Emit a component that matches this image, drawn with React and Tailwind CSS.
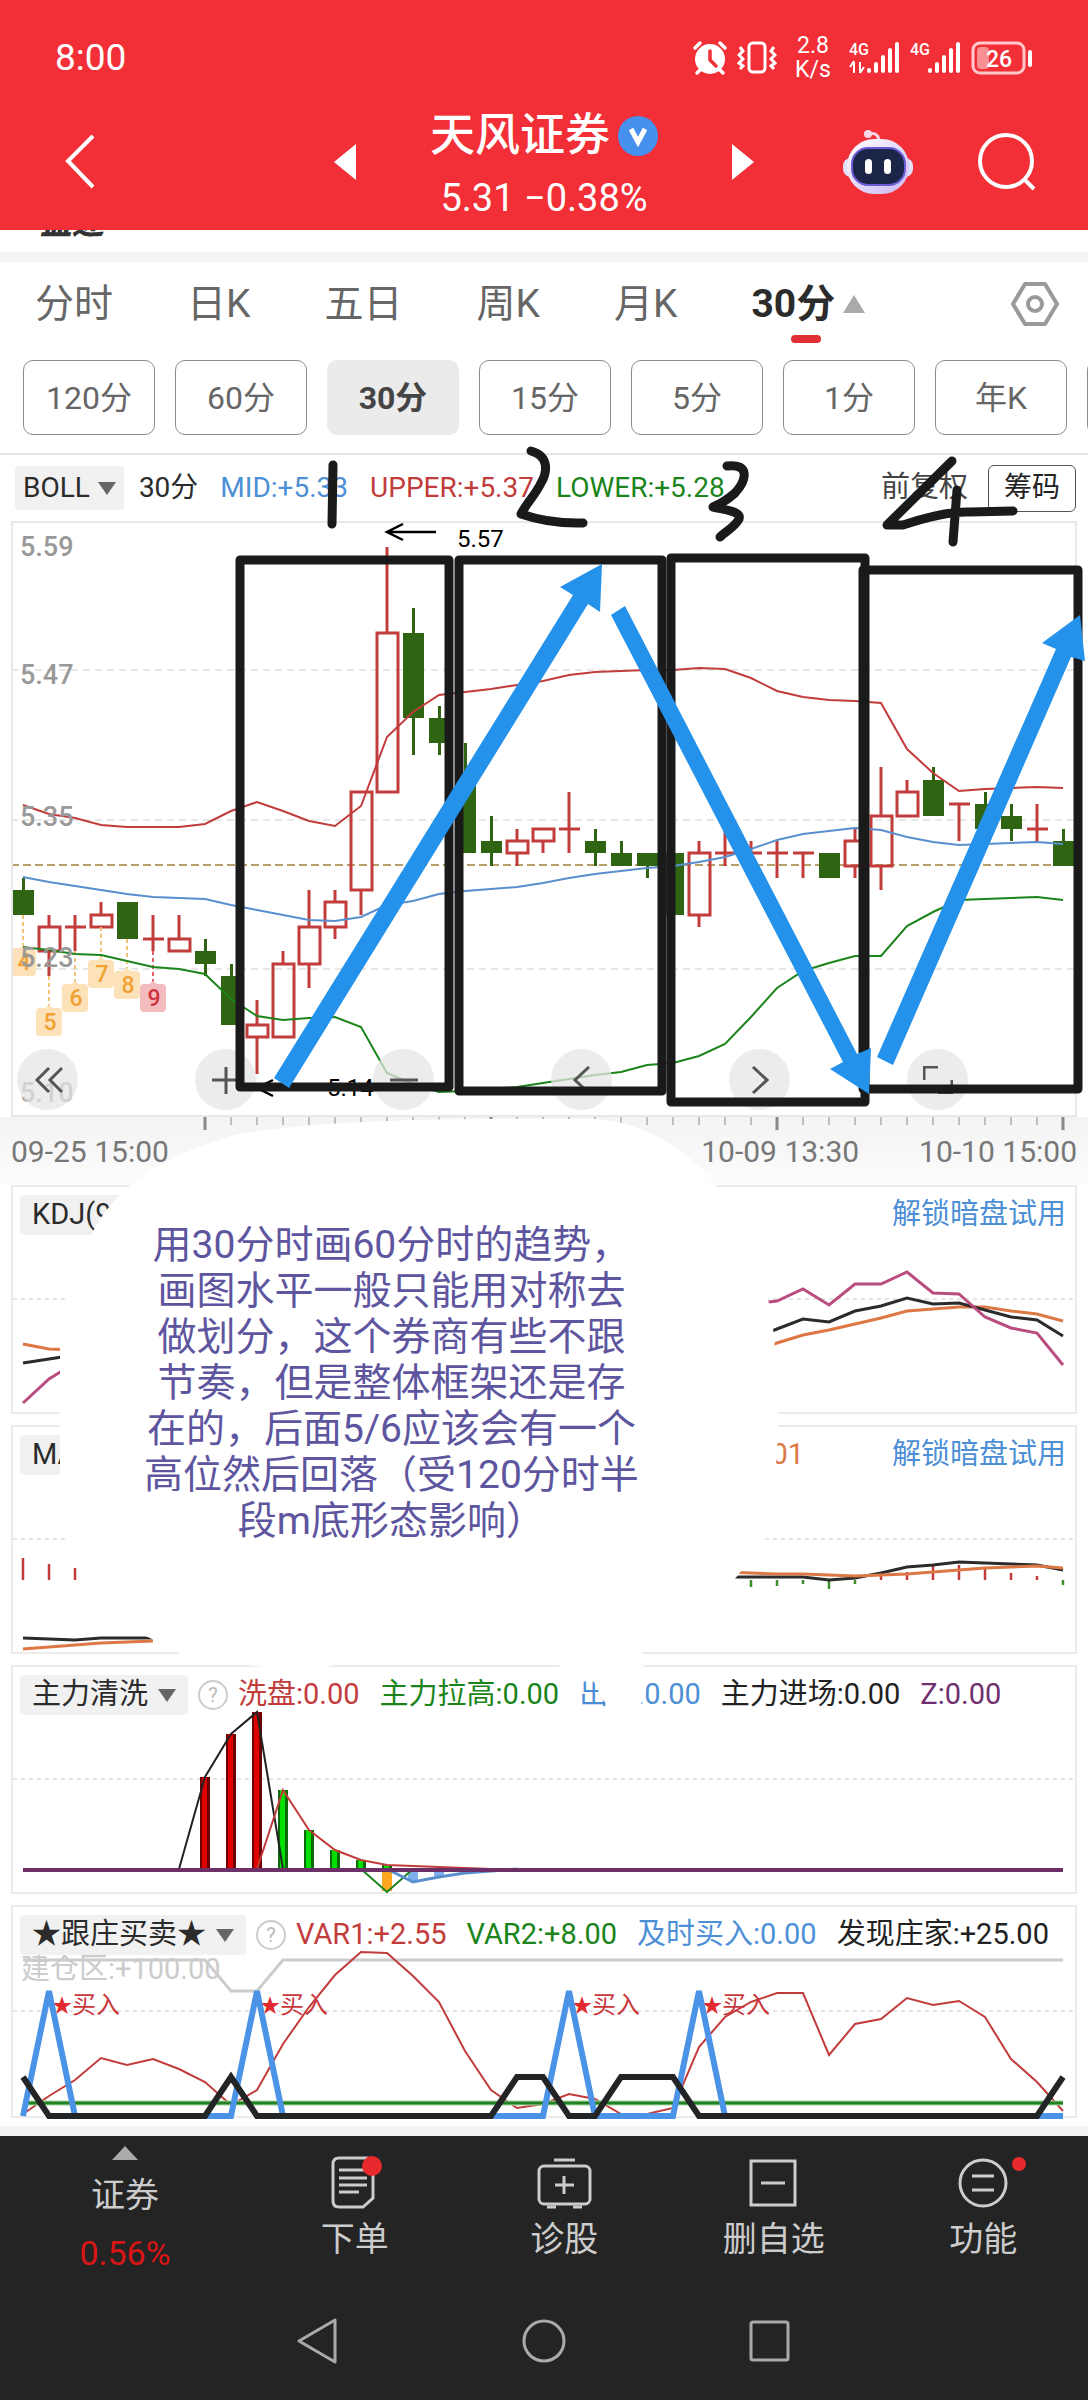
/* =========================================================================
   App — stock detail screen (30-minute K line) with a drawn-on mark-up layer
   Charts share one x scale: bar i sits at 12 + 26 * i inside a panel.
   ========================================================================= */

const RED = "#c23c3c";
const GREEN = "#2f6412";
const LINE_GREEN = "#1b841b";
const BLUE = "#5a8fce";
const INK = "#1a1a1a";

const barX = (i) => 12 + 26 * i;
const priceY = (p) => Math.round((559.1 - p) * 12.26);

// [open, high, low, close] in fen
const CANDLES = [
  [529, 530, 527, 527], [524, 527, 522, 526], [526, 527, 524, 526], [526, 528, 526, 527],
  [528, 528, 525, 525], [525, 527, 524, 525], [524, 527, 524, 525], [524, 525, 522, 523],
  [522, 523, 518, 518], [517, 520, 514, 518], [517, 524, 517, 523], [523, 529, 521, 526],
  [526, 529, 525, 528], [529, 537, 527, 537], [537, 557, 537, 550], [550, 552, 540, 543],
  [543, 544, 540, 541], [538, 541, 532, 532], [533, 535, 531, 532], [532, 534, 531, 533],
  [533, 534, 532, 534], [534, 537, 532, 534], [533, 534, 531, 532], [532, 533, 531, 531],
  [532, 532, 530, 531], [532, 532, 527, 527], [527, 533, 526, 532], [532, 534, 531, 532],
  [532, 533, 531, 532], [532, 533, 530, 532], [532, 532, 530, 532], [532, 532, 530, 530],
  [531, 534, 530, 533], [531, 539, 529, 535], [535, 538, 535, 537], [538, 539, 535, 535],
  [536, 536, 533, 536], [536, 537, 534, 534], [535, 536, 533, 534], [534, 536, 533, 534],
  [533, 534, 531, 531],
];

// Bollinger samples, in plot units
const bandY = (v) => Math.round(v * 0.3954 - 21);
const UPPER = [772, 795, 805, 823, 826, 828, 826, 820, 787, 764, 787, 812, 825, 775, 600, 537, 493, 486, 479, 469, 458, 442, 436, 432, 429, 429, 426, 427, 450, 483, 497, 505, 509, 514, 629, 690, 735, 732, 729, 725, 729];
const MID = [953, 967, 977, 987, 996, 1003, 1006, 1010, 1024, 1036, 1050, 1061, 1066, 1055, 1025, 1013, 996, 988, 984, 979, 968, 955, 945, 938, 930, 926, 916, 902, 882, 859, 845, 838, 830, 834, 853, 865, 873, 871, 868, 866, 870];
const LOWER = [1130, 1138, 1148, 1151, 1165, 1180, 1186, 1198, 1262, 1305, 1315, 1310, 1307, 1334, 1450, 1478, 1497, 1494, 1490, 1484, 1475, 1465, 1454, 1446, 1430, 1424, 1405, 1377, 1308, 1235, 1190, 1170, 1153, 1153, 1077, 1043, 1012, 1010, 1006, 1005, 1012];

const MARKS = [[0, 4, 425], [1, 5, 485], [2, 6, 461], [3, 7, 437], [4, 8, 448], [5, 9, 461]];
const PRICES = [["5.59", 26], ["5.47", 154], ["5.35", 296], ["5.23", 437], ["5.10", 572]];

const PERIODS = ["分时", "日K", "五日", "周K", "月K"];
const MINUTES = ["120分", "60分", "30分", "15分", "5分", "1分", "年K", "季K"];

// y values of consecutive bars → polyline points
const pts = (ys, from = 0) => ys.map((y, i) => `${barX(from + i)},${y}`).join(" ");

function Line({ ys, from, color, width = 2 }) {
  return <polyline points={pts(ys, from)} fill="none" stroke={color} strokeWidth={width} />;
}

/* ---------- header ---------- */

function Signal({ data }) {
  return (
    <svg width="52" height="36" viewBox="0 0 52 36" fill="#fff">
      <text x="0" y="15" fontSize="16" fontWeight="500">4G</text>
      {data && <path d="M5 22v11M5 21l-4 6M11 22v11M11 33l4-6" stroke="#fff" strokeWidth="2" fill="none" />}
      <rect x="18" y="28" width="4" height="5" rx="2" />
      <rect x="25" y="22" width="4" height="11" rx="2" />
      <rect x="32" y="15" width="4" height="18" rx="2" />
      <rect x="39" y="8" width="4" height="25" rx="2" />
      <rect x="46" y="2" width="4" height="31" rx="2" />
    </svg>
  );
}

function StatusBar() {
  return (
    <div className="flex h-[100px] items-center justify-between px-[55px] pt-4 text-white">
      <span className="text-[37px]">8:00</span>
      <div className="flex items-center gap-[9px]">
        <svg width="36" height="36" viewBox="0 0 36 36">
          <circle cx="18" cy="19" r="15" fill="#fff" />
          <path d="M3 8l5-5M33 8l-5-5M8 30l-3 3M28 30l3 3" stroke="#fff" strokeWidth="3.5" strokeLinecap="round" />
          <path d="M18 11v9l6 6" stroke="#f22f37" strokeWidth="3.5" fill="none" strokeLinecap="round" />
        </svg>
        <svg width="40" height="36" viewBox="0 0 40 36" fill="none" stroke="#fff" strokeWidth="3">
          <rect x="12" y="3" width="16" height="29" rx="4" />
          <path d="M3 7l3 4-4 4 4 4-4 4 4 3-3 3M37 7l-3 4 4 4-4 4 4 4-4 3 3 3" />
        </svg>
        <span className="w-[54px] text-center text-[23px] leading-6">2.8<br />K/s</span>
        <Signal data />
        <Signal />
        <svg width="62" height="34" viewBox="0 0 62 34">
          <rect x="2" y="2" width="51" height="30" rx="7" fill="none" stroke="#ffc9cb" strokeWidth="3" />
          <rect x="6" y="6" width="12" height="22" rx="4" fill="#f98f93" />
          <rect x="57" y="9" width="4" height="17" rx="2" fill="#fff" />
          <text x="28" y="26" fontSize="23" fontWeight="500" fill="#fff" textAnchor="middle">26</text>
        </svg>
      </div>
    </div>
  );
}

function Header() {
  return (
    <header className="bg-[#f22f37] pb-2.5 text-white">
      <StatusBar />
      <div className="grid h-[120px] grid-cols-[1fr_420px_1fr] items-center">
        <div className="pl-[64px]">
          <button aria-label="返回" className="block">
            <svg width="32" height="56" viewBox="0 0 32 56" fill="none" stroke="#fff" strokeWidth="4"><path d="M29 2L4 27l25 26" /></svg>
          </button>
        </div>
        <div className="flex items-center justify-between">
          <button aria-label="上一只">
            <svg width="22" height="36" viewBox="0 0 22 36" fill="#fff"><path d="M22 0v36L0 18z" /></svg>
          </button>
          <div className="text-center">
            <h1 className="flex items-center gap-2 text-[45px] leading-[72px] font-medium">
              天风证券
              <svg width="40" height="40" viewBox="0 0 40 40">
                <circle cx="20" cy="20" r="20" fill="#4690ee" />
                <path d="M13 13l7 13 7-13" stroke="#fff" strokeWidth="5" fill="none" />
              </svg>
            </h1>
            <p className="text-[38px] leading-[52px]">5.31 −0.38%</p>
          </div>
          <button aria-label="下一只">
            <svg width="22" height="36" viewBox="0 0 22 36" fill="#fff"><path d="M0 0v36l22-18z" /></svg>
          </button>
        </div>
        <div className="flex items-center justify-between pr-[51px] pl-[89px]">
          <button aria-label="智能助手">
            <svg width="70" height="66" viewBox="0 0 70 66">
              <defs>
                <linearGradient id="shell" x1="0" y1="0" x2="1" y2="1">
                  <stop offset="0" stopColor="#fff" /><stop offset="1" stopColor="#c9b8f3" />
                </linearGradient>
              </defs>
              <path d="M26 5c7-2 10 2 10 8" stroke="#f7d6e6" strokeWidth="3" fill="none" />
              <circle cx="25" cy="5" r="4" fill="#f7d6e6" />
              <rect x="0" y="29" width="70" height="19" rx="8" fill="#e2e0fb" />
              <rect x="4" y="10" width="62" height="55" rx="27" fill="url(#shell)" />
              <rect x="9" y="19" width="53" height="37" rx="16" fill="#1b2547" stroke="#6b5bd6" strokeWidth="2" />
              <rect x="22" y="30" width="7" height="15" rx="3.5" fill="#fff" />
              <rect x="41" y="30" width="7" height="15" rx="3.5" fill="#fff" />
            </svg>
          </button>
          <button aria-label="搜索">
            <svg width="60" height="60" viewBox="0 0 60 60" fill="none" stroke="#fff" strokeWidth="4">
              <circle cx="29" cy="29" r="26" /><path d="M47 47l10 10" />
            </svg>
          </button>
        </div>
      </div>
    </header>
  );
}

/* ---------- period tabs ---------- */

function Tabs() {
  return (
    <nav className="flex h-[84px] items-center justify-between pr-[28px] pl-[35px] text-[39px] text-[#666]">
      <div className="flex gap-[74px]">
        {PERIODS.map((p) => <button key={p}>{p}</button>)}
        <button className="relative flex items-center gap-2 font-bold text-[#2b2b2b]">
          30分
          <svg width="22" height="18" viewBox="0 0 22 18" fill="#aaa"><path d="M11 0l11 18H0z" /></svg>
          <span className="absolute -bottom-2.5 left-10 h-2 w-[30px] rounded-full bg-[#e03035]" />
        </button>
      </div>
      <button aria-label="设置">
        <svg width="50" height="46" viewBox="0 0 50 46" fill="none" stroke="#999" strokeWidth="4">
          <path d="M15 3h20l12 20-12 20H15L3 23z" strokeLinejoin="round" /><circle cx="25" cy="23" r="7" />
        </svg>
      </button>
    </nav>
  );
}

function MinuteRow() {
  return (
    <div className="flex gap-5 overflow-hidden border-b-2 border-[#e6e6e6] pt-3.5 pb-[18px] pl-[23px] text-[32px] text-[#666]">
      {MINUTES.map((m) => (
        <button
          key={m}
          className={m === "30分"
            ? "h-[75px] w-[132px] shrink-0 rounded-[10px] bg-[#ebebeb] font-bold text-[#444]"
            : "h-[75px] w-[132px] shrink-0 rounded-[10px] border border-[#8c8c8c]"}
        >
          {m}
        </button>
      ))}
    </div>
  );
}

/* ---------- K line ---------- */

function Candle({ i, o, h, l, c }) {
  const x = barX(i);
  const top = priceY(Math.max(o, c));
  const bottom = priceY(Math.min(o, c));
  if (o > c) {
    return (
      <g fill={GREEN}>
        <rect x={x - 1} y={priceY(h)} width="3" height={priceY(l) - priceY(h)} />
        <rect x={x - 10} y={top} width="21" height={bottom - top} />
      </g>
    );
  }
  return (
    <g fill="none" stroke={RED} strokeWidth="3">
      <path d={`M${x} ${priceY(h)}V${top}M${x} ${bottom}V${priceY(l)}`} />
      {top === bottom
        ? <path d={`M${x - 10} ${top}h21`} />
        : <rect x={x - 10} y={top} width="21" height={bottom - top} />}
    </g>
  );
}

function Mark({ i, n, top }) {
  const x = barX(i);
  const last = n === 9;
  return (
    <g>
      <path d={`M${x} ${priceY(CANDLES[i][2])}V${top}`} stroke={last ? "#e0606a" : "#f3c37a"} strokeWidth="2" strokeDasharray="4 3" />
      <path d={`M${x - 5} ${top + 3}l5-4 5 4z`} fill={last ? "#f5bcc0" : "#fde1b8"} />
      <rect x={x - 13} y={top + 2} width="26" height="28" rx="4" fill={last ? "#f5bcc0" : "#fde1b8"} />
      <text x={x + 1} y={top + 24} textAnchor="middle" fontSize="23" fontWeight="500" fill={last ? "#cf3340" : "#f0a232"}>{n}</text>
    </g>
  );
}

const CONTROLS = [
  ["更早", "M16 2L4 14l12 12M29 2L17 14l12 12"],
  ["放大", "M15 1v27M1 14h28"],
  ["缩小", "M1 14h28"],
  ["左移", "M22 1L8 14l14 13"],
  ["右移", "M8 1l14 13L8 27"],
  ["全屏", "M1 14V1h14M29 14v13H15"],
];

function KLine() {
  return (
    <div className="relative mx-[11px] border-2 border-[#e8e8e8]">
      <svg viewBox="2 2 1062 592" className="block h-auto w-full">
        {[149, 299, 448].map((y) => <path key={y} d={`M0 ${y}h1066`} stroke="#e0e0e0" strokeWidth="1.5" strokeDasharray="7 5" />)}
        <path d="M0 344h1066" stroke="#b99f6c" strokeWidth="2" strokeDasharray="8 4" />
        {CANDLES.map(([o, h, l, c], i) => <Candle key={i} i={i} o={o} h={h} l={l} c={c} />)}
        {MARKS.map(([i, n, top]) => <Mark key={n} i={i} n={n} top={top} />)}
        <Line ys={UPPER.map(bandY)} color={RED} />
        <Line ys={MID.map(bandY)} color={BLUE} />
        <Line ys={LOWER.map(bandY)} color={LINE_GREEN} />
        <g fill="#999" fontSize="27" fontWeight="500">
          {PRICES.map(([t, y]) => <text key={t} x="9" y={y + 9}>{t}</text>)}
        </g>
        <g fill="none" stroke="#000" strokeWidth="2.5">
          <path d="M425 11h-49M392 3l-16 8 16 8" />
          <path d="M295 567h-49M262 559l-16 8 16 8" />
        </g>
        <text x="446" y="26" fontSize="24">5.57</text>
        <text x="316" y="575" fontSize="24">5.14</text>
      </svg>
      <div className="absolute bottom-[5px] left-1 flex gap-[117px]">
        {CONTROLS.map(([label, d]) => (
          <button key={label} aria-label={label} className="flex size-[61px] items-center justify-center rounded-full bg-[#e6e6e6]/75">
            <svg width="30" height="28" viewBox="0 0 30 28" fill="none" stroke="#555" strokeWidth="3"><path d={d} /></svg>
          </button>
        ))}
      </div>
    </div>
  );
}

function TimeAxis() {
  const ticks = CANDLES.map((_, i) => i).slice(7);
  return (
    <div className="relative flex h-[68px] items-center gap-[60px] bg-linear-to-b from-[#f3f3f3] to-[#fcfcfc] px-[11px] text-[30px] text-[#777]">
      <svg viewBox="-11 0 1088 14" className="absolute top-0 left-0 w-full">
        {ticks.map((i) => (
          <path key={i} d={`M${barX(i)} 0v${(i - 7) % 11 === 0 ? 13 : 8}`} stroke="#888" strokeWidth={(i - 7) % 11 === 0 ? 3 : 1} />
        ))}
      </svg>
      <span className="mr-auto">09-25 15:00</span>
      <span>10-09 13:30</span>
      <span>10-10 15:00</span>
    </div>
  );
}

/* ---------- indicator panels ---------- */

function Caret() {
  return <svg width="18" height="13" viewBox="0 0 18 13" fill="#666"><path d="M0 0h18L9 13z" /></svg>;
}

function Chip({ children }) {
  return (
    <button aria-haspopup="listbox" className="flex h-10 items-center gap-2.5 rounded bg-[#f1f1f1] px-3 whitespace-nowrap text-[#2b2b2b]">
      {children}
      <Caret />
    </button>
  );
}

function Help() {
  return (
    <button aria-label="说明" className="flex size-[30px] shrink-0 items-center justify-center rounded-full border-2 border-[#ccc] text-xl text-[#bbb]">?</button>
  );
}

function Panel({ height, mid, head, children }) {
  return (
    <section className="relative mx-[11px] border-2 border-[#ebebeb]">
      <svg viewBox={`2 2 1062 ${height - 4}`} className="block h-auto w-full overflow-visible">
        <path d={`M2 ${mid}h1062`} stroke="#e6e6e6" strokeWidth="2" strokeDasharray="4 4" />
        {children}
      </svg>
      <div className="absolute inset-x-[7px] top-2 flex h-10 items-center gap-2.5 text-[29px] whitespace-nowrap">{head}</div>
    </section>
  );
}

function Value({ className, children }) {
  return <span className={"mr-2.5 " + className}>{children}</span>;
}

function Kdj() {
  return (
    <Panel height={229} mid={114} head={<><Chip>KDJ(9,3,3)</Chip><a href="#unlock" className="ml-auto pr-0.5 text-[#4d8fd6]">解锁暗盘试用</a></>}>
      <Line ys={[159, 164, 165]} color="#dd7744" width={3} />
      <Line ys={[178, 174, 170]} color="#2b2b2b" width={3} />
      <Line ys={[218, 194, 178]} color="#b94d80" width={3} />
      <Line from={28} ys={[170, 158, 150, 145, 139, 133, 126, 124, 122, 122, 126, 129, 136]} color="#dd7744" width={3} />
      <Line from={28} ys={[154, 144, 134, 137, 126, 121, 113, 119, 118, 125, 132, 135, 151]} color="#2b2b2b" width={3} />
      <Line from={28} ys={[119, 116, 104, 120, 99, 99, 87, 108, 109, 132, 143, 148, 180]} color="#b94d80" width={3} />
    </Panel>
  );
}

function Macd() {
  const up = [[0, 133, 155], [1, 139, 155], [2, 143, 155], [33, 151, 155], [34, 147, 155], [35, 141, 155], [36, 140, 155], [37, 144, 155], [38, 148, 155], [39, 151, 155]];
  const down = [[28, 155, 162], [29, 155, 161], [30, 155, 159], [31, 155, 164], [32, 155, 159], [40, 155, 160]];
  return (
    <Panel
      height={229}
      mid={114}
      head={<>
        <Chip>MACD</Chip>
        <span className="flex-1" />
        <span className="mr-[78px] text-[#dd7744]">DEA:+0.01</span>
        <a href="#unlock" className="pr-0.5 text-[#4d8fd6]">解锁暗盘试用</a>
      </>}
    >
      {up.map(([i, a, b]) => <path key={i} d={`M${barX(i)} ${a}V${b}`} stroke={RED} strokeWidth="2.5" />)}
      {down.map(([i, a, b]) => <path key={i} d={`M${barX(i)} ${a}V${b}`} stroke="#3c8f2c" strokeWidth="2.5" />)}
      <Line ys={[213, 214, 215, 213, 213, 213]} color="#2b2b2b" width={3} />
      <Line ys={[224, 222, 220, 218, 217, 216]} color="#dd7744" width={3} />
      <Line from={27} ys={[152, 152, 152, 152, 155, 153, 148, 142, 140, 137, 138, 139, 140, 145]} color="#2b2b2b" width={3} />
      <Line from={27} ys={[147, 148, 149, 149, 150, 151, 150, 149, 147, 145, 143, 142, 141, 143]} color="#dd7744" width={3} />
    </Panel>
  );
}

function Wash() {
  const reds = [[7, 112], [8, 69], [9, 47]];
  const greens = [[10, 125], [11, 165], [12, 185], [13, 195], [14, 200]];
  return (
    <Panel
      height={229}
      mid={114}
      head={<>
        <Chip>主力清洗</Chip>
        <Help />
        <Value className="text-[#c23c3c]">洗盘:0.00</Value>
        <Value className="text-[#1b841b]">主力拉高:0.00</Value>
        <Value className="text-[#4d8fd6]">出货:0.00</Value>
        <Value className="text-[#222]">主力进场:0.00</Value>
        <Value className="text-[#70306f]">Z:0.00</Value>
      </>}
    >
      {reds.map(([i, y]) => (
        <g key={i}>
          <rect x={barX(i) - 5} y={y} width="10" height={204 - y} fill="#6d0000" />
          <rect x={barX(i) - 3} y={y} width="5" height={204 - y} fill="#e00000" />
        </g>
      ))}
      {greens.map(([i, y]) => (
        <g key={i}>
          <rect x={barX(i) - 5} y={y} width="10" height={204 - y} fill="#0a6a0a" />
          <rect x={barX(i) - 3} y={y} width="5" height={204 - y} fill="#00e000" />
        </g>
      ))}
      <rect x={barX(14) - 5} y="204" width="10" height="22" fill="#ffa620" />
      <rect x={barX(15) - 5} y="204" width="10" height="12" fill="#7fb0ee" />
      <rect x={barX(16) - 5} y="204" width="10" height="7" fill="#7fb0ee" />
      <Line from={6} ys={[204, 112, 69, 47, 204]} color="#222" />
      <Line from={9} ys={[204, 125, 165, 185, 195, 200, 201, 202, 203, 204]} color={RED} />
      <Line from={13} ys={[204, 227, 204]} color={LINE_GREEN} />
      <Line from={14} ys={[204, 217, 212, 208, 206, 204]} color={BLUE} width={3} />
      <path d="M12 205h1040" stroke="#6b3068" strokeWidth="4" />
    </Panel>
  );
}

function Follow() {
  const buys = [1, 9, 21, 26];
  const black = CANDLES.map((_, i) => ([0, 8, 19, 20, 23, 24, 25, 40].includes(i) ? 172 : 211));
  const blue = CANDLES.map((_, i) => (buys.includes(i) ? 86 : 211));
  const grey = CANDLES.map((_, i) => (i === 8 || i === 9 ? 86 : 55));
  const red = [209, 191, 175, 153, 160, 154, 164, 177, 200, 185, 139, 102, 70, 47, 48, 71, 97, 146, 185, 203, 199, 189, 194, 209, 209, 203, 142, 112, 97, 88, 88, 150, 119, 114, 93, 100, 96, 112, 154, 177, 206];
  return (
    <Panel
      height={213}
      mid={106}
      head={<>
        <Chip>★跟庄买卖★</Chip>
        <Help />
        <Value className="text-[#c23c3c]">VAR1:+2.55</Value>
        <Value className="text-[#1b841b]">VAR2:+8.00</Value>
        <Value className="text-[#4d8fd6]">及时买入:0.00</Value>
        <Value className="text-[#222]">发现庄家:+25.00</Value>
      </>}
    >
      <text x="10" y="74" fontSize="29" fill="#ccc">建仓区:+100.00</text>
      <Line ys={grey} color="#ccc" width={3} />
      <Line ys={red} color={RED} />
      {buys.map((i) => (
        <text key={i} x={barX(i) + 3} y="108" fontSize="24" fill="#c8383c"><tspan fill="#e02b2f" fontSize="20">★</tspan>买入</text>
      ))}
      <path d="M12 198h1040" stroke="#a8d8a4" strokeWidth="5" />
      <path d="M12 198h1040" stroke="#238023" strokeWidth="3" />
      <Line ys={blue} color="#4b93e6" width={6} />
      <Line ys={black} color="#222426" width={6} />
    </Panel>
  );
}

/* ---------- mark-up drawn over the charts ---------- */

function Sketch() {
  return (
    <svg viewBox="0 455 1088 1270" className="pointer-events-none absolute inset-x-0 top-0 w-full overflow-visible" fill="none">
      <g stroke={INK} strokeWidth="9" strokeLinecap="round" strokeLinejoin="round">
        <rect x="240" y="560" width="209" height="527" />
        <rect x="459" y="560" width="203" height="531" />
        <rect x="671" y="558" width="194" height="544" />
        <rect x="863" y="570" width="215" height="519" />
        <path d="M333 465L332 524" />
        <path d="M531 451C550 456 547 473 541 483C536 494 526 504 521 514Q550 524 583 523" />
        <path d="M727 466C750 463 747 480 735 493C727 500 718 505 713 507C730 511 741 512 739 519C735 527 726 531 720 537" />
        <path d="M952 461L887 525H903Q945 511 970 512L1013 511M957 490L953 542" />
      </g>
      <g fill="#2492ea">
        <path d="M274 1078L573 595L560 587L602 564L600 612L588 604L289 1088z" />
        <path d="M611 615L843 1062L830 1069L869 1094L871 1048L857 1054L625 606z" />
        <path d="M877 1057L1056 649L1042 643L1080 615L1085 661L1071 657L893 1065z" />
      </g>
      <path
        fill="#fff"
        d="M500 1119C420 1119 300 1122 240 1134C190 1146 150 1168 128 1187C112 1203 100 1215 92 1234C75 1262 60 1300 60 1340V1470C62 1520 68 1560 82 1575C100 1610 130 1630 150 1638L182 1655L240 1664L300 1672L347 1663H553L594 1682L603 1700L615 1712C632 1716 645 1705 646 1690L641 1640C680 1620 715 1600 730 1585L742 1570L762 1540L774 1480C779 1450 779 1400 775 1350C772 1290 750 1230 717 1187C690 1150 640 1119 590 1119z"
      />
    </svg>
  );
}

const NOTE = [
  "用30分时画60分时的趋势，", "画图水平一般只能用对称去", "做划分，这个券商有些不跟",
  "节奏，但是整体框架还是存", "在的，后面5/6应该会有一个", "高位然后回落（受120分时半", "段m底形态影响）",
];

function Note() {
  return (
    <p className="absolute top-[767px] left-[13%] w-[500px] text-center text-[39px] leading-[46px] whitespace-nowrap text-[#5e559f]">
      {NOTE.map((t) => <span key={t} className="block">{t}</span>)}
    </p>
  );
}

/* ---------- bottom bars ---------- */

function BottomBar() {
  const items = [
    ["下单", <g key="a"><path d="M10 2h28q6 0 6 6v34l-10 9H10q-6 0-6-6V8q0-6 6-6zM10 14h28M10 22h28M10 29h28M10 36h20" /><circle cx="43" cy="10" r="10" fill="#e8292d" stroke="none" /></g>],
    ["诊股", <g key="b"><rect x="0" y="10" width="51" height="38" rx="5" /><path d="M15 4h21M25 20v18M16 29h19M8 51h9M34 51h9" /></g>],
    ["删自选", <path key="c" d="M3 5h44v44H3zM13 27h24" />],
    ["功能", <g key="d"><circle cx="25" cy="27" r="23" /><path d="M14 20h22M14 34h22" /><circle cx="61" cy="8" r="7" fill="#e8292d" stroke="none" /></g>],
  ];
  return (
    <footer className="h-[264px] bg-[#242424] text-[#ccc]">
      <div className="flex h-[160px] text-[34px]">
        <button className="flex w-[250px] flex-col items-center pt-2.5">
          <svg width="26" height="14" viewBox="0 0 26 14" fill="#aaa"><path d="M13 0l13 14H0z" /></svg>
          <span className="mt-2.5 leading-[50px]">证券</span>
          <span className="mt-2 leading-[50px] text-[#d91616]">0.56%</span>
        </button>
        {items.map(([label, icon]) => (
          <button key={label} className="flex flex-1 flex-col items-center pt-5">
            <svg width="51" height="54" viewBox="0 0 51 54" fill="none" stroke="#ccc" strokeWidth="3" className="overflow-visible">{icon}</svg>
            <span className="mt-1 leading-[50px]">{label}</span>
          </button>
        ))}
      </div>
      <div className="flex h-[90px] items-center justify-center gap-[182px]">
        <button aria-label="后退"><svg width="44" height="48" viewBox="0 0 44 48" fill="none" stroke="#aaa" strokeWidth="3"><path d="M39 3v42L3 24z" strokeLinejoin="round" /></svg></button>
        <button aria-label="主页"><svg width="44" height="48" viewBox="0 0 44 48" fill="none" stroke="#aaa" strokeWidth="3"><circle cx="22" cy="24" r="20" /></svg></button>
        <button aria-label="多任务"><svg width="44" height="48" viewBox="0 0 44 48" fill="none" stroke="#aaa" strokeWidth="3"><rect x="3" y="5" width="37" height="38" rx="2" /></svg></button>
      </div>
    </footer>
  );
}

export default function App() {
  return (
    <div lang="zh-CN" className="min-h-screen overflow-hidden bg-white font-[Roboto,'Noto_Sans_CJK_SC',sans-serif]">
      <Header />
      <div className="flex h-[22px] items-start overflow-hidden pl-10">
        <span className="-mt-7 text-[32px] leading-[42px] font-black text-[#333] italic">盘速</span>
      </div>
      <div className="h-2.5 bg-[#f3f3f3]" />
      <Tabs />
      <MinuteRow />

      <main className="relative">
        <div className="flex h-[66px] items-center pr-3 pl-[15px] text-[28px] whitespace-nowrap">
          <button aria-haspopup="listbox" className="flex h-11 items-center gap-2 rounded bg-[#f1f1f1] px-2 text-[#2b2b2b]">BOLL<Caret /></button>
          <span className="ml-[15px] text-[#2b2b2b]">30分</span>
          <span className="ml-[22px] text-[#4d8fd6]">MID:+5.33</span>
          <span className="ml-[22px] text-[#c23c3c]">UPPER:+5.37</span>
          <span className="ml-[22px] text-[#1b841b]">LOWER:+5.28</span>
          <span className="ml-auto text-[29px] text-[#444]">前复权</span>
          <button className="ml-5 h-[47px] rounded-md border border-[#555] px-[15px] text-[#222]">筹码</button>
        </div>
        <KLine />
        <TimeAxis />
        <div className="flex flex-col gap-[11px]">
          <Kdj />
          <Macd />
          <Wash />
          <Follow />
        </div>
        <Sketch />
        <Note />
      </main>

      <div className="mt-2 h-2.5 bg-[#f3f3f3]" />
      <BottomBar />
    </div>
  );
}
